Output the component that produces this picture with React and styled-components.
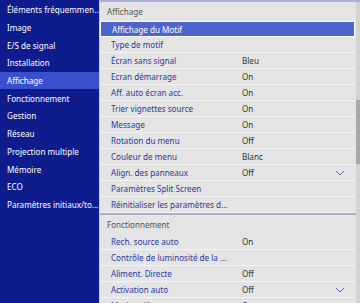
import React from "react";
import styled, { createGlobalStyle } from "styled-components";

const Global = createGlobalStyle`
  html, body { margin: 0; padding: 0; background: #e4e4e4; }
  body { font-family: "Noto Sans", "Open Sans", sans-serif; }
  #root { width: 360px; height: 303px; overflow: hidden; }
`;

const Screen = styled.div`
  display: flex;
  width: 360px;
  height: 303px;
  overflow: hidden;
`;

const Sidebar = styled.div`
  width: 99px;
  flex: none;
  background: #0e1c8e;
  padding-top: 1px;
  box-sizing: border-box;
`;

const SideItem = styled.div`
  height: 17.7px;
  display: flex;
  align-items: center;
  padding-left: 7px;
  font-size: 8.1px;
  color: #ffffff;
  white-space: nowrap;
  overflow: hidden;
  background: ${(p) => (p.$active ? "#3a50cc" : "transparent")};
`;

const Panel = styled.div`
  flex: 1;
  display: flex;
  background: #e4e4e4;
  border-top: 2px solid #aab0d8;
  border-left: 1px solid #d0d0d8;
  box-sizing: border-box;
`;

const List = styled.div`
  flex: 1;
  display: flex;
  flex-direction: column;
  min-width: 0;
`;

const Header = styled.div`
  height: ${(p) => p.$h}px;
  display: flex;
  align-items: center;
  padding-left: 7px;
  font-size: 8.1px;
  color: #555;
  flex: none;
`;

const Row = styled.div`
  height: 16px;
  flex: none;
  display: grid;
  grid-template-columns: 131px 1fr 20px;
  align-items: center;
  box-sizing: border-box;
  padding-left: 11px;
  font-size: 8.1px;
  white-space: nowrap;
  border: ${(p) => (p.$active ? "1px solid #ffffff" : "none")};
  border-bottom: 1px solid ${(p) => (p.$active ? "#ffffff" : "#f3f3f3")};
  background: ${(p) => (p.$active ? "#4c64cc" : "transparent")};
  margin-right: 1px;
`;

const Label = styled.span`
  color: ${(p) => (p.$active ? "#ffffff" : "#2a3a9c")};
  overflow: hidden;
`;

const Value = styled.span`
  color: #333;
`;

const Divider = styled.div`
  height: 2px;
  flex: none;
  background: #a9aecc;
`;

const Scrollbar = styled.div`
  width: 4px;
  flex: none;
  background: #d2d2d2;
  display: flex;
  flex-direction: column;
`;

const Thumb = styled.div`
  margin-top: ${(p) => p.$top}px;
  height: ${(p) => p.$h}px;
  background: #a8a8a8;
`;

const Chevron = () => (
  <svg width="10" height="6" viewBox="0 0 10 6">
    <polyline points="1,1 5,5 9,1" fill="none" stroke="#5a68b8" strokeWidth="1" />
  </svg>
);

const side = [
  "Éléments fréquemmen...",
  "Image",
  "E/S de signal",
  "Installation",
  "Affichage",
  "Fonctionnement",
  "Gestion",
  "Réseau",
  "Projection multiple",
  "Mémoire",
  "ECO",
  "Paramètres initiaux/to...",
];

const aff = [
  ["Affichage du Motif", "", false, true],
  ["Type de motif", ""],
  ["Écran sans signal", "Bleu"],
  ["Ecran démarrage", "On"],
  ["Aff. auto écran acc.", "On"],
  ["Trier vignettes source", "On"],
  ["Message", "On"],
  ["Rotation du menu", "Off"],
  ["Couleur de menu", "Blanc"],
  ["Align. des panneaux", "Off", true],
  ["Paramètres Split Screen", ""],
  ["Réinitialiser les paramètres d...", ""],
];

const fonc = [
  ["Rech. source auto", "On"],
  ["Contrôle de luminosité de la ...", ""],
  ["Aliment. Directe", "Off"],
  ["Activation auto", "Off", true],
  ["Mode veille", "On"],
];

const renderRows = (rows) =>
  rows.map(([l, v, chev, active]) => (
    <Row key={l} $active={active}>
      <Label $active={active}>{l}</Label>
      <Value>{v}</Value>
      <span>{chev ? <Chevron /> : null}</span>
    </Row>
  ));

export default function App() {
  return (
    <>
      <Global />
      <Screen>
        <Sidebar>
          {side.map((s) => (
            <SideItem key={s} $active={s === "Affichage"}>
              {s}
            </SideItem>
          ))}
        </Sidebar>
        <Panel>
          <List>
            <Header $h={19}>Affichage</Header>
            {renderRows(aff)}
            <Divider />
            <Header $h={19}>Fonctionnement</Header>
            {renderRows(fonc)}
          </List>
          <Scrollbar>
            <Thumb $top={98} $h={64} />
          </Scrollbar>
        </Panel>
      </Screen>
    </>
  );
}
